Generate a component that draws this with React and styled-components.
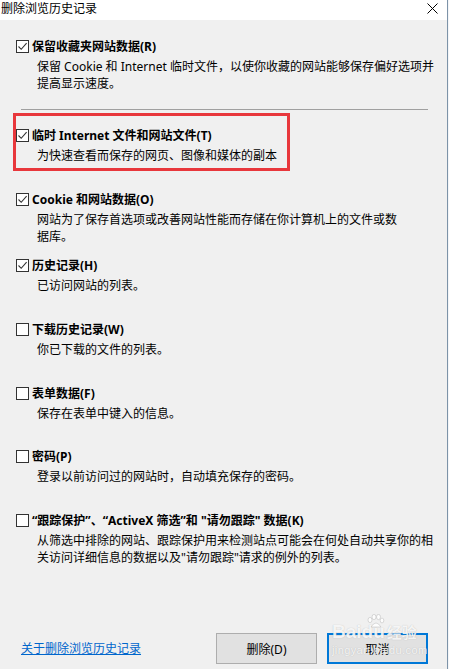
import React from "react";
import styled, { createGlobalStyle } from "styled-components";

const GlobalStyle = createGlobalStyle`
  html, body {
    margin: 0;
    padding: 0;
    background: #f3f5f8;
  }
  body {
    font-family: "Noto Sans", "Noto Sans CJK SC", sans-serif;
    font-size: 12px;
    color: #000;
  }
`;

const Window = styled.div`
  position: relative;
  width: 448px;
  height: 669px;
  box-sizing: border-box;
  border-right: 1px solid #7d93a8;
  background: #f0f0f0;
  display: flex;
  flex-direction: column;
  overflow: hidden;
`;

const TitleBar = styled.div`
  height: 20px;
  flex-shrink: 0;
  background: #fff;
  display: flex;
  align-items: center;
  justify-content: space-between;
  padding: 0 9px 0 1px;
  font-size: 12px;
  line-height: 14px;
  color: #000;
`;

const Title = styled.span`
  margin-top: -3px;
`;

const CloseIcon = () => (
  <svg width="11" height="11" viewBox="0 0 11 11" style={{ marginTop: -4 }}>
    <path d="M0.5 0.5 L10.5 10.5 M10.5 0.5 L0.5 10.5" stroke="#000" strokeWidth="1" fill="none" />
  </svg>
);

const Body = styled.div`
  flex: 1;
  display: flex;
  flex-direction: column;
  padding: 20px 19px 5px 16px;
`;

const Item = styled.div`
  position: relative;
  height: ${(p) => (p.$h ? `${p.$h}px` : "auto")};
  flex-shrink: 0;
`;

const Row = styled.div`
  display: flex;
  align-items: center;
  height: 13px;
`;

const Box = styled.span`
  width: 13px;
  height: 13px;
  box-sizing: border-box;
  border: 1px solid #333;
  background: #fff;
  display: inline-flex;
  align-items: center;
  justify-content: center;
  flex-shrink: 0;
`;

const Label = styled.span`
  margin-left: 3px;
  font-weight: bold;
  line-height: 13px;
  white-space: nowrap;
`;

const Desc = styled.div`
  margin: 5px 0 0 21px;
  line-height: 17px;
  white-space: nowrap;
`;

const Separator = styled.div`
  height: 1px;
  background: #a0a0a0;
  margin: 17px 0 19px 5px;
  flex-shrink: 0;
`;

const Highlight = styled.div`
  position: absolute;
  left: -3px;
  top: -16px;
  width: 277px;
  height: 58px;
  box-sizing: border-box;
  border: 3px solid #e8373c;
  pointer-events: none;
`;

const Footer = styled.div`
  margin-top: auto;
  display: flex;
  align-items: center;
  gap: 10px;
`;

const Link = styled.a`
  margin-left: 5px;
  margin-right: auto;
  color: #0066cc;
  text-decoration: underline;
  line-height: 14px;
  cursor: pointer;
`;

const Button = styled.button`
  width: 101px;
  height: 31px;
  box-sizing: border-box;
  background: #e1e1e1;
  border: ${(p) => (p.$default ? "2px solid #0078d7" : "1px solid #adadad")};
  font-family: inherit;
  font-size: 12px;
  color: #000;
  padding: 0;
`;

const Watermark = styled.div`
  position: absolute;
  left: 332px;
  top: 622px;
  pointer-events: none;
  color: rgba(255, 255, 255, 0.85);
  text-shadow: 0 0 1px rgba(120, 120, 120, 0.45);
  font-family: "Liberation Sans", Arial, "Noto Sans CJK SC", sans-serif;
`;

const MarkTop = styled.div`
  display: flex;
  align-items: flex-end;
  font-size: 19px;
  font-weight: bold;
  line-height: 20px;
`;

const MarkCn = styled.span`
  font-size: 15px;
  margin-left: 2px;
  font-family: "Noto Sans CJK SC", sans-serif;
`;

const MarkSub = styled.div`
  font-size: 11px;
  line-height: 12px;
  margin-top: 2px;
  letter-spacing: 0.4px;
`;

const Check = () => (
  <svg width="11" height="11" viewBox="0 0 11 11">
    <path d="M1.5 5.5 L4.2 8.3 L9.6 2.2" stroke="#333" strokeWidth="1.1" fill="none" />
  </svg>
);

const Paw = () => (
  <svg width="20" height="14" viewBox="0 0 20 14" style={{ position: "absolute", left: 33, top: -8 }}>
    <g fill="rgba(255,255,255,0.85)" stroke="rgba(130,130,130,0.45)" strokeWidth="0.6">
      <ellipse cx="5" cy="6" rx="2" ry="2.6" />
      <ellipse cx="9" cy="3" rx="2" ry="2.6" />
      <ellipse cx="13.5" cy="3" rx="2" ry="2.6" />
      <ellipse cx="17" cy="6.5" rx="1.8" ry="2.4" />
      <path d="M6 13 Q11 5 16 13 Z" />
    </g>
  </svg>
);

const CheckItem = ({ checked, label, lines, h, children }) => (
  <Item $h={h}>
    {children}
    <Row>
      <Box>{checked && <Check />}</Box>
      <Label>{label}</Label>
    </Row>
    <Desc>
      {lines.map((l, i) => (
        <div key={i}>{l}</div>
      ))}
    </Desc>
  </Item>
);

export default function App() {
  return (
    <>
      <GlobalStyle />
      <Window>
        <TitleBar>
          <Title>删除浏览历史记录</Title>
          <CloseIcon />
        </TitleBar>
        <Body>
          <CheckItem
            checked
            label="保留收藏夹网站数据(R)"
            lines={[
              "保留 Cookie 和 Internet 临时文件，以使你收藏的网站能够保存偏好选项并",
              "提高显示速度。",
            ]}
          />
          <Separator />
          <CheckItem
            checked
            h={64}
            label="临时 Internet 文件和网站文件(T)"
            lines={["为快速查看而保存的网页、图像和媒体的副本"]}
          >
            <Highlight />
          </CheckItem>
          <CheckItem
            checked
            h={66}
            label="Cookie 和网站数据(O)"
            lines={[
              "网站为了保存首选项或改善网站性能而存储在你计算机上的文件或数",
              "据库。",
            ]}
          />
          <CheckItem checked h={64} label="历史记录(H)" lines={["已访问网站的列表。"]} />
          <CheckItem h={64} label="下载历史记录(W)" lines={["你已下载的文件的列表。"]} />
          <CheckItem h={63} label="表单数据(F)" lines={["保存在表单中键入的信息。"]} />
          <CheckItem
            h={64}
            label="密码(P)"
            lines={["登录以前访问过的网站时，自动填充保存的密码。"]}
          />
          <CheckItem
            label={'“跟踪保护”、“ActiveX 筛选”和 "请勿跟踪" 数据(K)'}
            lines={[
              "从筛选中排除的网站、跟踪保护用来检测站点可能会在何处自动共享你的相",
              '关访问详细信息的数据以及"请勿跟踪"请求的例外的列表。',
            ]}
          />
          <Footer>
            <Link>关于删除浏览历史记录</Link>
            <Button>删除(D)</Button>
            <Button $default>取消</Button>
          </Footer>
        </Body>
        <Watermark>
          <Paw />
          <MarkTop>
            Baidu<MarkCn>经验</MarkCn>
          </MarkTop>
          <MarkSub>jingyan.baidu.com</MarkSub>
        </Watermark>
      </Window>
    </>
  );
}
